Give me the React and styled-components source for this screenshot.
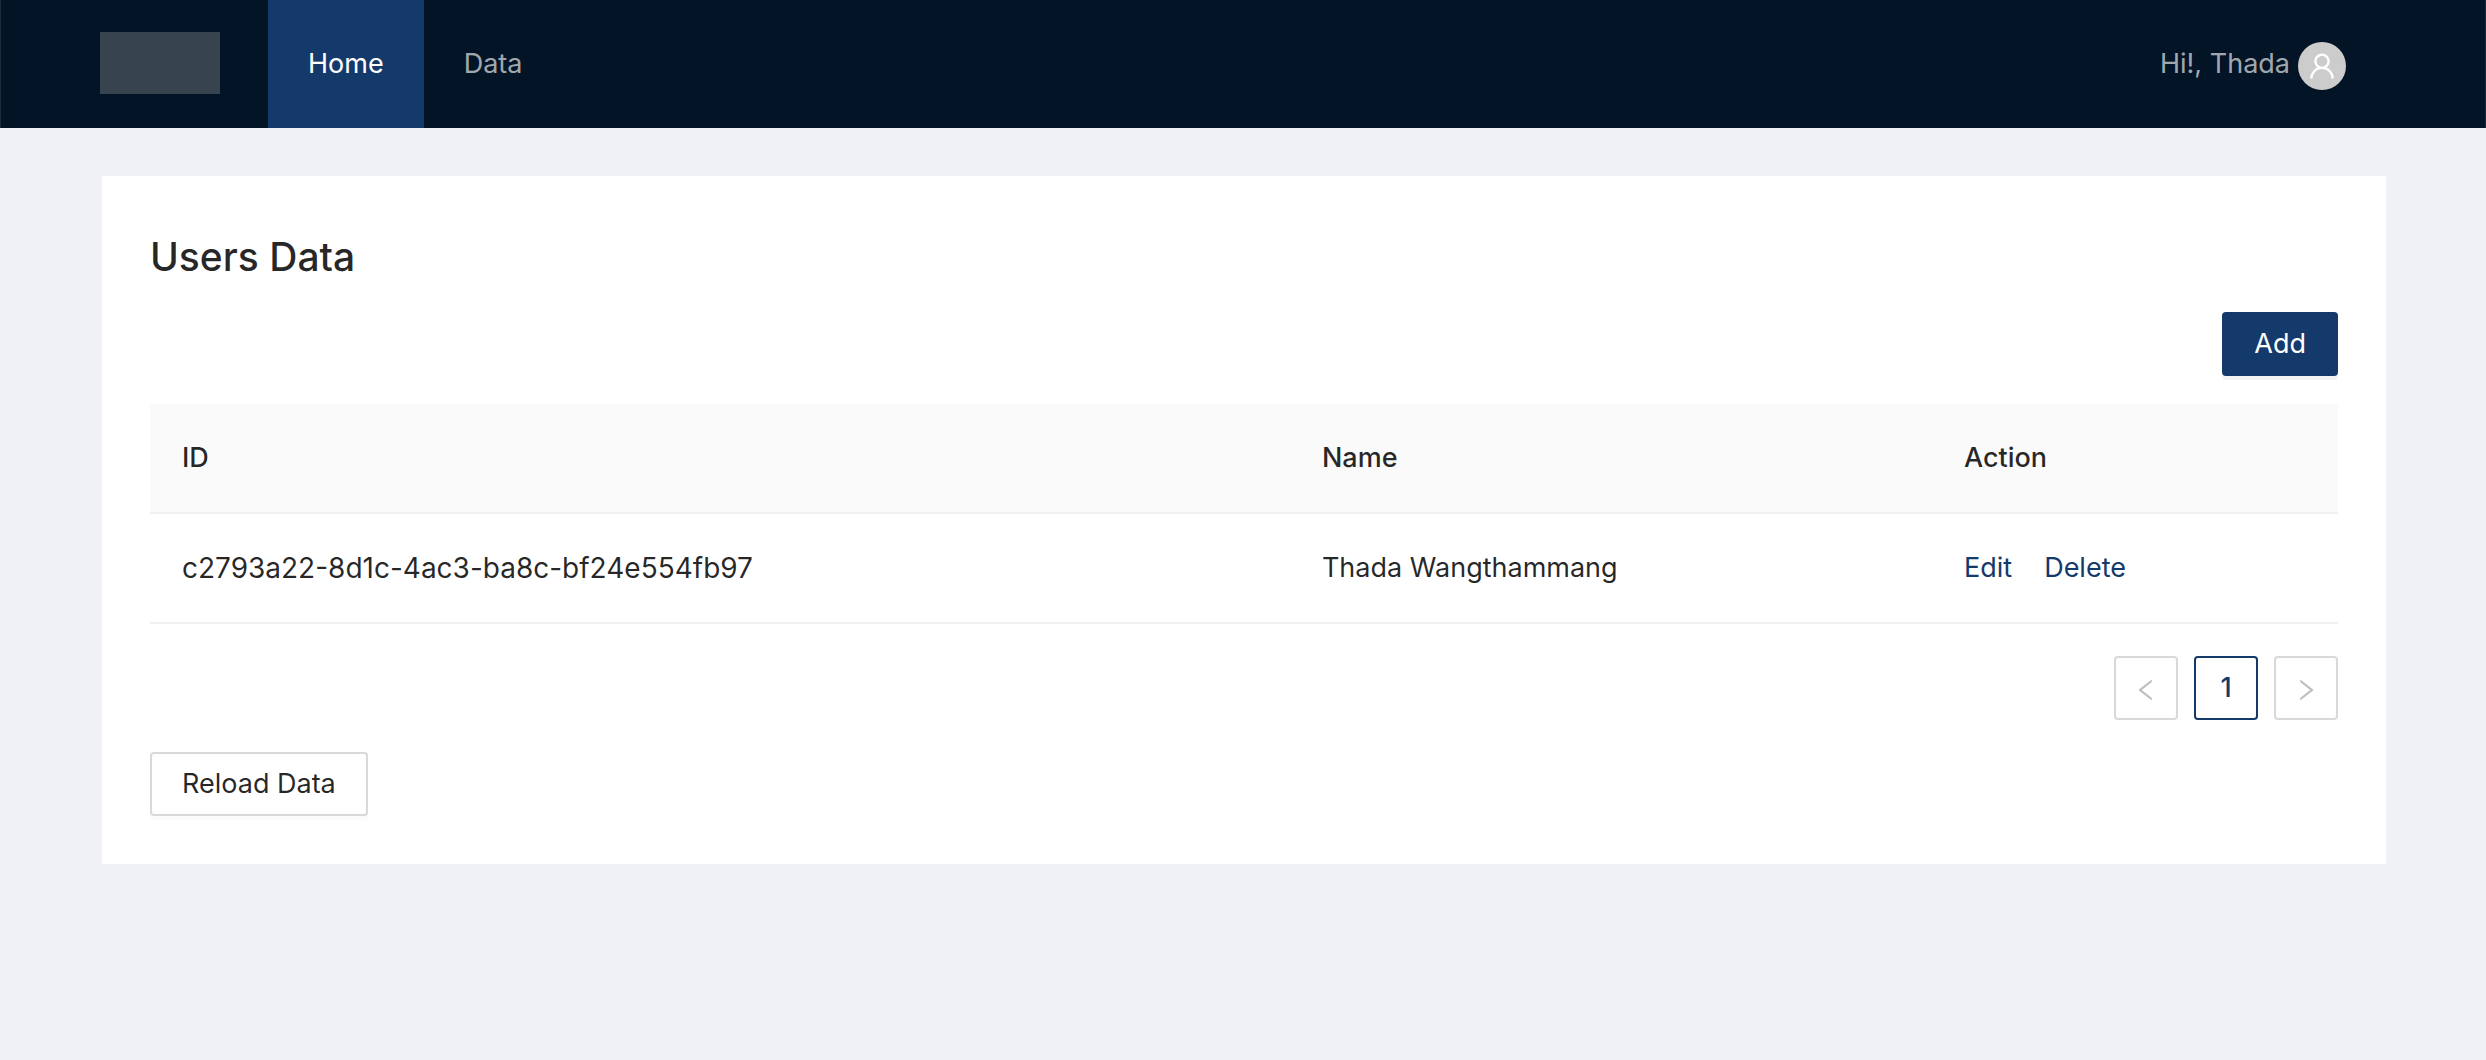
import React from "react";
import styled, { createGlobalStyle } from "styled-components";

const navy = "#143a6b";
const ink = "rgba(0, 0, 0, 0.85)";

const GlobalStyle = createGlobalStyle`
  *, *::before, *::after { box-sizing: border-box; }
  body {
    margin: 0;
    background: #f0f1f6;
    color: ${ink};
    font: 400 27px/44px Inter, "Liberation Sans", sans-serif;
  }
  button { font: inherit; cursor: pointer; }
  a { text-decoration: none; }
`;

const Header = styled.header`
  display: flex;
  height: 128px;
  padding: 0 139px 0 99px;
  border: solid #1c2c3a;
  border-width: 0 1px;
  background: #021425;
  line-height: 128px;
`;

const Logo = styled.div`
  width: 120px;
  height: 62px;
  margin: 32px 48px 0 0;
  background: #37444f;
`;

const Nav = styled.nav`
  display: flex;
  flex: 1;
`;

const NavLink = styled.a`
  padding: 0 40px;
  color: ${(p) => (p.$active ? "#fff" : "rgba(255, 255, 255, 0.65)")};
  background: ${(p) => (p.$active ? navy : "transparent")};
`;

const Account = styled.div`
  display: flex;
  gap: 8px;
  color: rgba(255, 255, 255, 0.65);
`;

const Avatar = styled.span`
  display: flex;
  align-items: center;
  justify-content: center;
  width: 48px;
  height: 48px;
  margin-top: 42px;
  border-radius: 50%;
  background: #ccc;
  color: #fff;
`;

const Icon = styled.svg`
  display: block;
  width: ${(p) => p.$size}px;
  height: ${(p) => p.$size}px;
  fill: currentColor;
`;

const Card = styled.main`
  margin: 48px 100px 48px 102px;
  padding: 48px;
  background: #fff;
`;

const Title = styled.h2`
  margin: 0 0 22px;
  font-size: 39px;
  font-weight: 500;
  line-height: 66px;
`;

const Toolbar = styled.div`
  display: flex;
  justify-content: flex-end;
  margin-bottom: 28px;
`;

const Button = styled.button`
  height: 64px;
  padding: 0 30px;
  border: 2px solid ${(p) => (p.$primary ? navy : "#d9d9d9")};
  border-radius: 4px;
  background: ${(p) => (p.$primary ? navy : "#fff")};
  color: ${(p) => (p.$primary ? "#fff" : ink)};
  line-height: 60px;
  box-shadow: 0 4px 0 rgba(0, 0, 0, ${(p) => (p.$primary ? 0.045 : 0.016)});
`;

const Table = styled.table`
  width: 100%;
  table-layout: fixed;
  border-collapse: separate;
  border-spacing: 0;
  text-align: left;
`;

const Column = styled.col`
  width: ${(p) => p.$width};
`;

const HeadCell = styled.th`
  padding: 32px;
  border-bottom: 2px solid #f0f0f0;
  background: #fafafa;
  font-weight: 500;

  &:first-child { border-top-left-radius: 4px; }
  &:last-child { border-top-right-radius: 4px; }
`;

const Cell = styled.td`
  padding: 32px;
  border-bottom: 2px solid #f0f0f0;
`;

const IdCell = styled(Cell)`
  font-size: 28px;
`;

const Actions = styled.div`
  display: flex;
  gap: 32px;
`;

const ActionLink = styled.a`
  color: ${navy};
`;

const Pagination = styled.nav`
  display: flex;
  justify-content: flex-end;
  gap: 16px;
  margin: 32px 0;
`;

const PageButton = styled.button`
  display: flex;
  align-items: center;
  justify-content: center;
  width: 64px;
  height: 64px;
  padding: 0;
  border: 2px solid ${(p) => (p.$active ? navy : "#d9d9d9")};
  border-radius: 4px;
  background: #fff;
  color: ${navy};
  font-weight: 500;

  &:disabled {
    padding-top: 4px;
    color: rgba(0, 0, 0, 0.25);
    cursor: not-allowed;
  }
`;

const UserIcon = () => (
  <Icon $size={32} viewBox="0 0 1024 1024" aria-hidden="true">
    <path d="M858.5 763.6a374 374 0 00-80.6-119.5 375.63 375.63 0 00-119.5-80.6c-.4-.2-.8-.3-1.2-.5C719.5 518 760 444.7 760 362c0-137-111-248-248-248S264 225 264 362c0 82.7 40.5 156 102.8 201.1-.4.2-.8.3-1.2.5-44.8 18.9-85 46-119.5 80.6a375.63 375.63 0 00-80.6 119.5A371.7 371.7 0 00136 901.8a8 8 0 008 8.2h60c4.4 0 7.9-3.5 8-7.8 2-77.2 33-149.5 87.8-204.3 56.7-56.7 132-87.9 212.2-87.9s155.5 31.2 212.2 87.9C779 752.7 810 825 812 902.2c.1 4.4 3.6 7.8 8 7.8h60a8 8 0 008-8.2c-1-47.8-10.9-94.3-29.5-138.2zM512 534c-45.9 0-89.1-17.9-121.6-50.4S340 407.9 340 362c0-45.9 17.9-89.1 50.4-121.6S466.1 190 512 190s89.1 17.9 121.6 50.4S684 316.1 684 362c0 45.9-17.9 89.1-50.4 121.6S557.9 534 512 534z" />
  </Icon>
);

const ChevronIcon = ({ flip }) => (
  <Icon $size={28} viewBox="0 0 1024 1024" aria-hidden="true">
    <path
      transform={flip ? "translate(1024 0) scale(-1 1)" : undefined}
      d="M724 218.3V141c0-6.7-7.7-10.4-12.9-6.3L260.3 486.8a31.86 31.86 0 000 50.3l450.8 352.1c5.3 4.1 12.9.4 12.9-6.3v-77.3c0-4.9-2.3-9.6-6.1-12.6l-360-281 360-281.1c3.8-3 6.1-7.7 6.1-12.6z"
    />
  </Icon>
);

const users = [
  { id: "c2793a22-8d1c-4ac3-ba8c-bf24e554fb97", name: "Thada Wangthammang" },
];

export default function App() {
  return (
    <>
      <GlobalStyle />
      <Header>
        <Logo />
        <Nav>
          <NavLink href="#home" $active>Home</NavLink>
          <NavLink href="#data">Data</NavLink>
        </Nav>
        <Account>
          <span>Hi!, Thada</span>
          <Avatar><UserIcon /></Avatar>
        </Account>
      </Header>
      <Card>
        <Title>Users Data</Title>
        <Toolbar>
          <Button type="button" $primary>Add</Button>
        </Toolbar>
        <Table>
          <colgroup>
            <Column $width="52.1%" />
            <Column />
            <Column $width="406px" />
          </colgroup>
          <thead>
            <tr>
              <HeadCell scope="col">ID</HeadCell>
              <HeadCell scope="col">Name</HeadCell>
              <HeadCell scope="col">Action</HeadCell>
            </tr>
          </thead>
          <tbody>
            {users.map((user) => (
              <tr key={user.id}>
                <IdCell>{user.id}</IdCell>
                <Cell>{user.name}</Cell>
                <Cell>
                  <Actions>
                    <ActionLink href="#edit">Edit</ActionLink>
                    <ActionLink href="#delete">Delete</ActionLink>
                  </Actions>
                </Cell>
              </tr>
            ))}
          </tbody>
        </Table>
        <Pagination aria-label="Pagination">
          <PageButton type="button" disabled aria-label="Previous page"><ChevronIcon /></PageButton>
          <PageButton type="button" $active>1</PageButton>
          <PageButton type="button" disabled aria-label="Next page"><ChevronIcon flip /></PageButton>
        </Pagination>
        <Button type="button">Reload Data</Button>
      </Card>
    </>
  );
}
